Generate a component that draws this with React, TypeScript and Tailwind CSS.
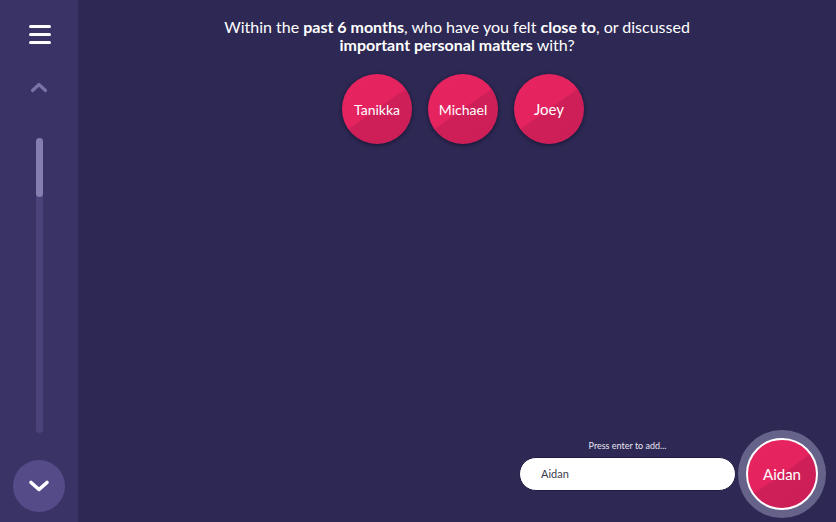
import React from "react";

const pink = "bg-[linear-gradient(145deg,#e7245f_0%,#e4235f_49%,#cf1f58_51%,#cc1e57_100%)]";

function Bubble({ name, big }: { name: string; big?: boolean }) {
  return (
    <div
      className={`w-[70px] h-[70px] rounded-full ${pink} shadow-[0_1px_4px_rgba(10,8,30,0.7)] flex items-center justify-center text-white ${big ? "text-[15px]" : "text-[14px]"}`}
    >
      {name}
    </div>
  );
}

export default function App() {
  return (
    <div
      className="w-[836px] h-[522px] flex overflow-hidden bg-[#2e2954]"
      style={{ fontFamily: "Lato, 'Noto Sans', sans-serif" }}
    >
      {/* Sidebar */}
      <div className="w-[78px] h-full bg-[#3a3366] flex flex-col items-center pt-[25px]">
        <div className="w-[22px] flex flex-col gap-[5px] ml-[1px]">
          <div className="h-[3px] rounded-full bg-white" />
          <div className="h-[3px] rounded-full bg-white" />
          <div className="h-[3px] rounded-full bg-white" />
        </div>
        <svg width="18" height="12" viewBox="0 0 18 12" className="mt-[37px]">
          <path d="M2.5 9.5 L9 3.5 L15.5 9.5" fill="none" stroke="#7a73a8" strokeWidth="3.2" strokeLinecap="round" strokeLinejoin="round" />
        </svg>
        <div className="mt-[45px] w-[7px] h-[295px] rounded-full bg-[#4a4279] flex flex-col">
          <div className="h-[59px] rounded-full bg-[#857fb0]" />
        </div>
        <div className="mt-[27px] w-[52px] h-[52px] rounded-full bg-[#544b88] flex items-center justify-center">
          <svg width="22" height="14" viewBox="0 0 22 14">
            <path d="M3 3.5 L11 10.5 L19 3.5" fill="none" stroke="#ffffff" strokeWidth="3.6" strokeLinecap="round" strokeLinejoin="round" />
          </svg>
        </div>
      </div>

      {/* Main */}
      <div className="flex-1 h-full flex flex-col">
        <div className="pt-[18px] text-center text-white text-[16px] leading-[18px]">
          Within the <span className="font-bold">past 6 months</span>, who have you felt{" "}
          <span className="font-bold">close to</span>, or discussed
          <br />
          <span className="font-bold">important personal matters</span> with?
        </div>
        <div className="mt-[20px] flex justify-center gap-[16px] pl-[12px]">
          <Bubble name="Tanikka" />
          <Bubble name="Michael" />
          <Bubble name="Joey" big />
        </div>
        <div className="flex-1" />
        <div className="flex items-end justify-end pr-[10px] pb-[4px]">
          <div className="flex flex-col items-center mb-[27px]">
            <div className="text-[9px] text-[#e6e4f0] mb-[5px]">Press enter to add...</div>
            <div className="w-[217px] h-[34px] rounded-full bg-white border border-[#1f1b40] flex items-center pl-[21px] text-[11px] text-[#3a3a4a]">
              Aidan
            </div>
          </div>
          <div className="ml-[2px] w-[88px] h-[88px] rounded-full bg-[#66638a] flex items-center justify-center">
            <div
              className={`w-[72px] h-[72px] rounded-full border-2 border-white ${pink} flex items-center justify-center text-white text-[15px]`}
            >
              Aidan
            </div>
          </div>
        </div>
      </div>
    </div>
  );
}
